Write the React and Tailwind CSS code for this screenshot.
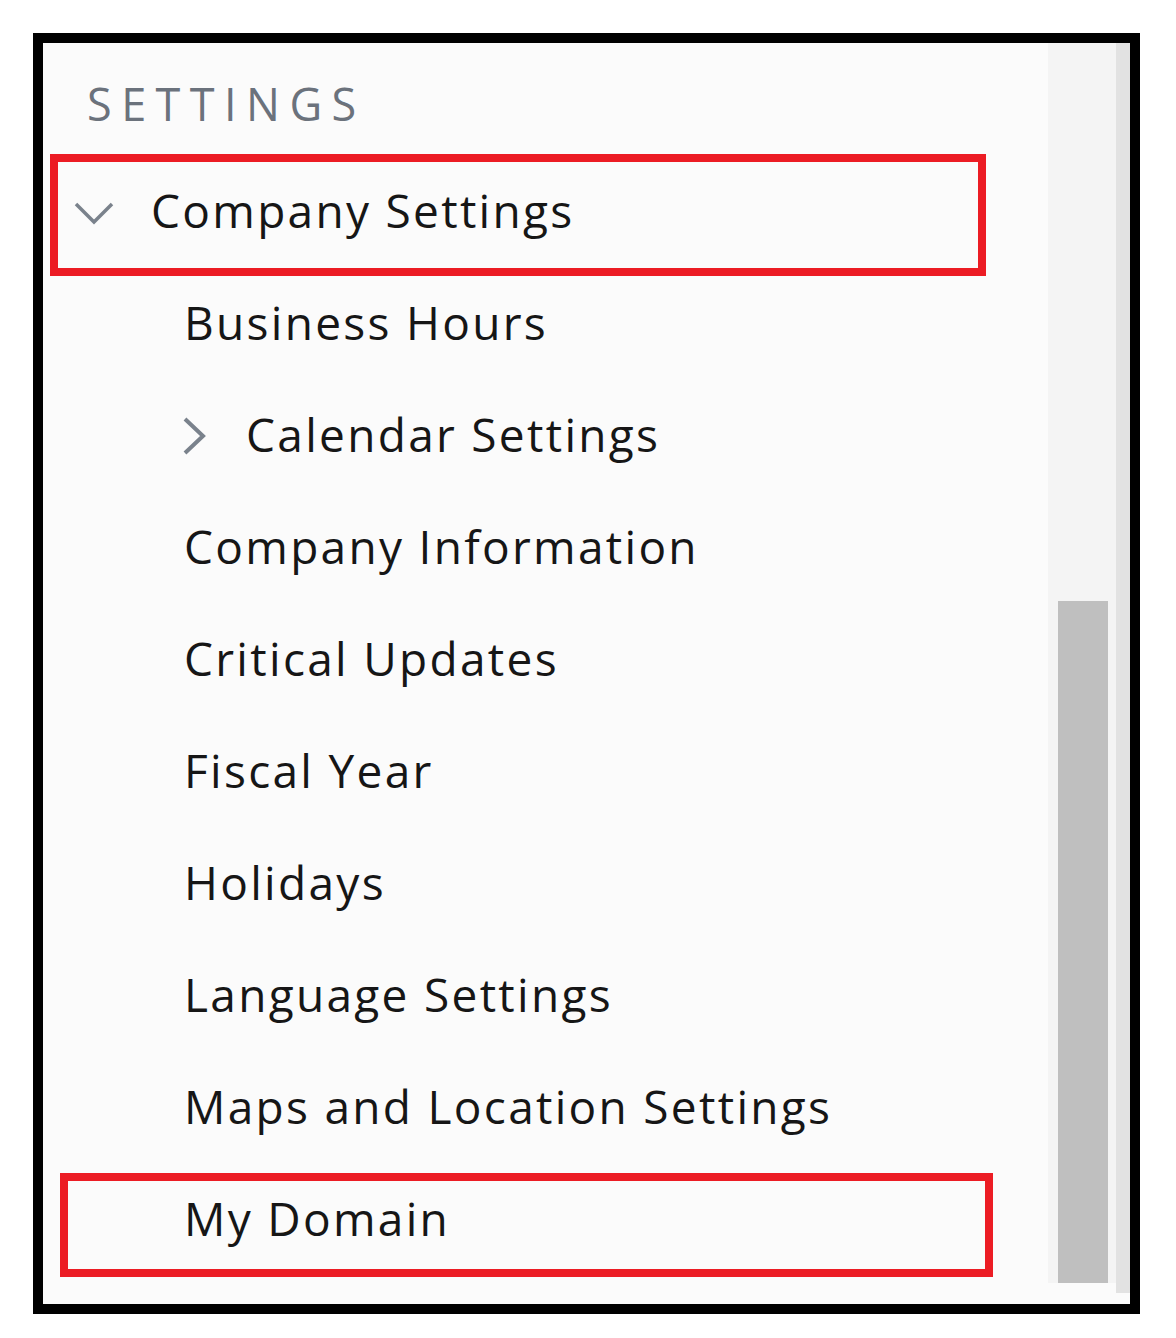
import React from 'react';

const subItems = [
  { label: 'Business Hours' },
  { label: 'Calendar Settings', expandable: true },
  { label: 'Company Information' },
  { label: 'Critical Updates' },
  { label: 'Fiscal Year' },
  { label: 'Holidays' },
  { label: 'Language Settings' },
  { label: 'Maps and Location Settings' },
  { label: 'My Domain', highlight: true },
];

const ChevronDown = () => (
  <svg width="40" height="24" viewBox="0 0 40 24" className="absolute left-[31px] top-[45px]">
    <polyline points="2,3 20,21 38,3" fill="none" stroke="#7a828c" strokeWidth="3.5" />
  </svg>
);

const ChevronRight = () => (
  <svg width="26" height="38" viewBox="0 0 26 38" className="absolute left-[139px] top-[37px]">
    <polyline points="3,2 21,19 3,36" fill="none" stroke="#7a828c" strokeWidth="4" />
  </svg>
);

const NavRow = ({ item }) => (
  <div className="relative h-[112px] flex items-center pb-[3px]">
    {item.expandable && <ChevronRight />}
    <span className={item.expandable ? 'pl-[203px]' : 'pl-[141px]'}>{item.label}</span>
    {item.highlight && (
      <div className="absolute left-[17px] top-[9px] w-[933px] h-[104px] border-[8px] border-[#ec1c24]" />
    )}
  </div>
);

export default function App() {
  return (
    <div
      className="min-h-[1338px] bg-white pt-[33px] pl-[33px]"
      style={{ fontFamily: '"Open Sans", "Noto Sans", sans-serif' }}
    >
      <div className="w-[1107px] h-[1281px] border-[10px] border-black bg-[#fbfbfb] flex">
        {/* menu column */}
        <div className="flex-1 flex flex-col text-[46px] tracking-[0.05em] text-[#161616]">
          <div className="h-[113px] pl-[44px] flex items-center pt-[8px]">
            <span className="text-[45px] tracking-[0.21em] text-[#6b727c] leading-none">SETTINGS</span>
          </div>

          <div className="relative h-[112px] flex items-center pb-[3px]">
            <ChevronDown />
            <span className="pl-[108px]">Company Settings</span>
            <div className="absolute left-[7px] top-[-2px] w-[936px] h-[122px] border-[8px] border-[#ec1c24]" />
          </div>

          {subItems.map((item) => (
            <NavRow key={item.label} item={item} />
          ))}
        </div>

        {/* scrollbar */}
        <div className="w-[68px] flex flex-col pb-[21px]">
          <div className="flex-1 bg-[#f4f4f4] pt-[558px] pl-[10px] pr-[8px] flex flex-col">
            <div className="flex-1 bg-[#bfbfbf]" />
          </div>
        </div>
        <div className="w-[14px] flex flex-col pb-[11px]">
          <div className="flex-1 bg-[#e2e2e2]" />
        </div>
      </div>
    </div>
  );
}
